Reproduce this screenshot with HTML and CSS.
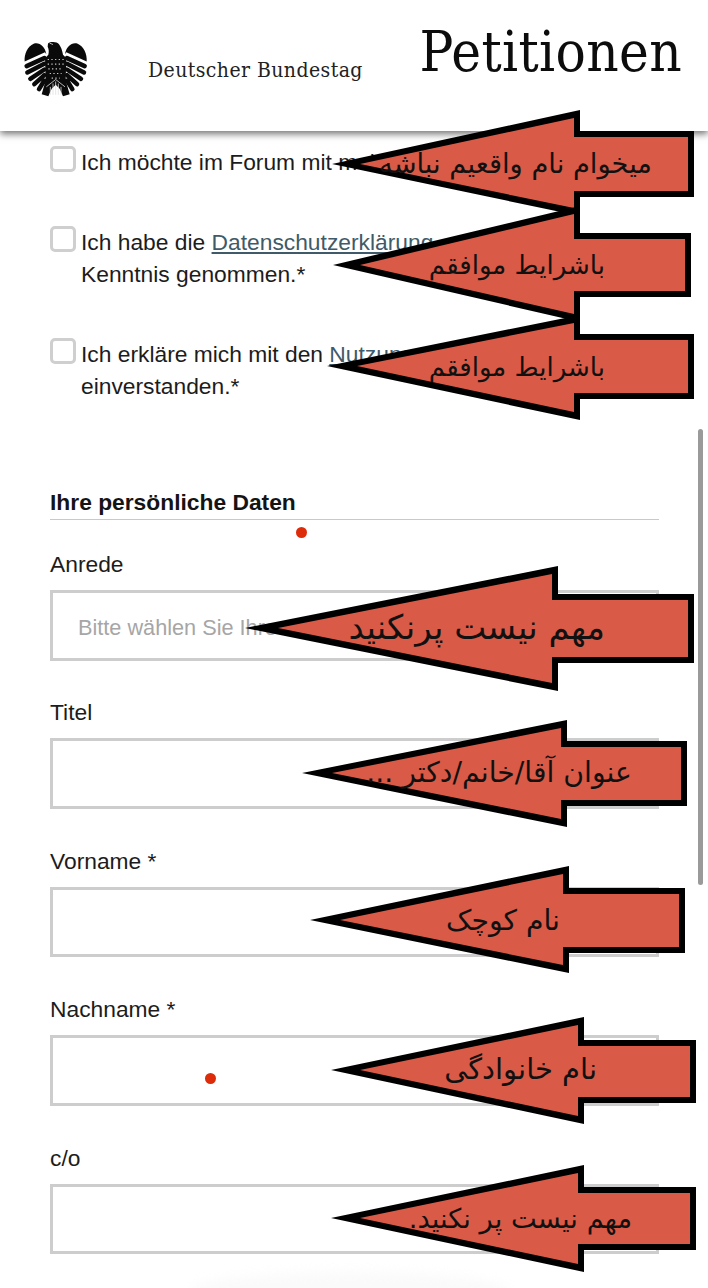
FILE: index.html
```html
<!DOCTYPE html>
<html lang="de">
<head>
<meta charset="utf-8">
<title>Petitionen</title>
<link rel="stylesheet" href="styles.css">
</head>
<body>
<div class="page">
  <header class="site-header">
    <svg class="eagle" viewBox="40 30 195 170" aria-hidden="true">
      <defs>
        <g id="wing">
          <path class="ink" d="M110 72C106 48 88 35 72 41C54 49 43 72 45 94L106 66Z"/>
          <path class="plume" d="M104 84L51 108M104 101L53 127M104 118L62 146M104 135L74 162M104 151L88 177"/>
        </g>
      </defs>
      <use href="#wing"/>
      <use href="#wing" transform="matrix(-1 0 0 1 276 0)"/>
      <path class="ink" d="M115 40C122 34 142 34 148 42C154 50 158 60 160 74L170 84L168 150L180 192L160 198L150 176L138 164L126 176L116 198L96 192L108 150L106 84L116 74C118 66 118 58 114 50Z"/>
      <path class="feather" d="M120 39L130 43"/>
      <path class="dots" d="M114 88H162M114 102H162M116 116H160M120 130H156M126 144H150"/>
      <path class="feather" d="M110 170L138 148L166 170M122 194V170M130 194V160M138 194V154M146 194V160M154 194V170"/>
    </svg>
    <span class="org">Deutscher Bundestag</span>
    <span class="site-title">Petitionen</span>
  </header>

  <main class="content">
    <div class="checks">
      <label class="check"><span class="box"></span><span class="check-text">Ich möchte im Forum mit meinem Namen</span></label>
      <label class="check"><span class="box"></span><span class="check-text">Ich habe die <a href="#">Datenschutzerklärung</a><br>Kenntnis genommen.*</span></label>
      <label class="check"><span class="box"></span><span class="check-text">Ich erkläre mich mit den <a href="#">Nutzungsbedingungen</a><br>einverstanden.*</span></label>
    </div>

    <h2 class="section-title">Ihre persönliche Daten</h2>

    <div class="field"><span class="label">Anrede</span><div class="input placeholder">Bitte wählen Sie Ihre Anrede</div></div>
    <div class="field"><span class="label">Titel</span><div class="input"></div></div>
    <div class="field"><span class="label">Vorname *</span><div class="input"></div></div>
    <div class="field"><span class="label">Nachname *</span><div class="input"></div></div>
    <div class="field"><span class="label">c/o</span><div class="input"></div></div>
  </main>

  <div class="scrollbar"></div>
  <div class="dot dot-a"></div>
  <div class="dot dot-b"></div>
  <div class="glow"></div>

  <svg class="arrows" viewBox="0 0 708 1288">
    <g class="arrow">
      <polygon class="out" points="332,164 580,110 580,131 694,131 694,197 580,197 580,216"/>
      <polygon class="in" points="360,164 574,118 574,137 688,137 688,191 574,191 574,208"/>
      <text class="s27" x="652" y="173">میخوام نام واقعیم نباشه</text>
    </g>
    <g class="arrow">
      <polygon class="out" points="333,265 580,206 580,233 691,233 691,297 580,297 580,322"/>
      <polygon class="in" points="360,265 574,214 574,239 685,239 685,291 574,291 574,314"/>
      <text x="605" y="274">باشرایط موافقم</text>
    </g>
    <g class="arrow">
      <polygon class="out" points="327,366 580,315 580,334 694,334 694,399 580,399 580,420"/>
      <polygon class="in" points="357,366 574,323 574,340 688,340 688,393 574,393 574,412"/>
      <text x="605" y="376">باشرایط موافقم</text>
    </g>
    <g class="arrow">
      <polygon class="out" points="245,628 558,566 558,594 694,594 694,663 558,663 558,691"/>
      <polygon class="in" points="278,628 552,574 552,600 688,600 688,657 552,657 552,683"/>
      <text class="s34" x="605" y="639">مهم نیست پرنکنید</text>
    </g>
    <g class="arrow">
      <polygon class="out" points="302,773 567,720 567,741 687,741 687,806 567,806 567,827"/>
      <polygon class="in" points="332,773 561,728 561,747 681,747 681,800 561,800 561,819"/>
      <text class="s28" x="632" y="782">عنوان آقا/خانم/دکتر ...</text>
    </g>
    <g class="arrow">
      <polygon class="out" points="310,920 569,866 569,888 685,888 685,953 569,953 569,973"/>
      <polygon class="in" points="340,920 563,874 563,894 679,894 679,947 563,947 563,965"/>
      <text class="s28" x="560" y="930">نام کوچک</text>
    </g>
    <g class="arrow">
      <polygon class="out" points="331,1070 584,1017 584,1040 696,1040 696,1103 584,1103 584,1124"/>
      <polygon class="in" points="360,1070 578,1025 578,1046 690,1046 690,1097 578,1097 578,1116"/>
      <text class="s29" x="597" y="1079">نام خانوادگی</text>
    </g>
    <g class="arrow">
      <polygon class="out" points="331,1218 584,1165 584,1187 696,1187 696,1250 584,1250 584,1272"/>
      <polygon class="in" points="360,1218 578,1173 578,1193 690,1193 690,1244 578,1244 578,1264"/>
      <text class="s27" x="632" y="1228">مهم نیست پر نکنید.</text>
    </g>
  </svg>
</div>
</body>
</html>
```

FILE: styles.css
```css
* { box-sizing: border-box; }
html, body { margin: 0; padding: 0; background: #fff; }
body { font-family: "Liberation Sans", Arial, sans-serif; color: #1c1c1c; }

.page {
  position: relative;
  width: 708px;
  height: 1288px;
  overflow: hidden;
  background: #fff;
}

.site-header {
  position: relative;
  z-index: 2;
  height: 131px;
  display: flex;
  align-items: flex-start;
  padding-right: 26px;
  background: #fff;
  box-shadow: 0 3px 7px rgba(0, 0, 0, 0.55);
}

.eagle {
  width: 65px;
  height: 57px;
  margin: 40px 0 0 23px;
  flex: none;
}
.ink { fill: #0a0a0a; }
.plume { fill: none; stroke: #0a0a0a; stroke-width: 13.5; stroke-linecap: round; }
.feather { fill: none; stroke: #e0e0e0; stroke-width: 2.4; }
.dots { fill: none; stroke: #c4c4c4; stroke-width: 3.6; stroke-dasharray: 4 7; }

.org {
  margin: 57px 0 0 60px;
  font-family: "DejaVu Serif", "Liberation Serif", serif;
  font-stretch: condensed;
  font-size: 21px;
  letter-spacing: 0.42px;
  line-height: 26px;
  color: #222;
  white-space: nowrap;
}
.site-title {
  margin: 18px 0 0 auto;
  font-family: "DejaVu Serif", "Liberation Serif", serif;
  font-stretch: condensed;
  font-size: 56px;
  letter-spacing: 0.35px;
  line-height: 68px;
  color: #0c0c0c;
  white-space: nowrap;
}

.content { padding: 15px 49px 0 50px; }

.checks { display: flex; flex-direction: column; gap: 48px; }
.check {
  display: flex;
  align-items: flex-start;
  gap: 5px;
  font-size: 22.8px;
  line-height: 32px;
  white-space: nowrap;
}
.box {
  flex: none;
  width: 26px;
  height: 26px;
  border: 3px solid #cfcfcf;
  border-radius: 5px;
  background: #fff;
}
.check a { color: #3f5a68; text-decoration: underline; }

.section-title {
  margin: 86px 0 0;
  padding-bottom: 3px;
  font-size: 22.8px;
  line-height: 28px;
  font-weight: 700;
  color: #141414;
  border-bottom: 1.5px solid #c9c9c9;
}

.field { margin-top: 30px; }
.field + .field { margin-top: 37.9px; }
.label { display: block; font-size: 22.8px; line-height: 28px; height: 40px; }
.input {
  height: 70.5px;
  border: 3px solid #cdcdcd;
  background: #fff;
  padding: 0 25px;
  white-space: nowrap;
  overflow: hidden;
}
.input.placeholder { color: #a6a6a6; font-size: 21.7px; line-height: 69px; }

.scrollbar {
  position: absolute;
  left: 698px;
  top: 429px;
  width: 5px;
  height: 456px;
  border-radius: 3px;
  background: #9a9a9a;
}
.dot {
  position: absolute;
  width: 11px;
  height: 11px;
  border-radius: 50%;
  background: #dd2c0a;
}
.dot-a { left: 296px; top: 527px; }
.dot-b { left: 205px; top: 1073px; }
.glow {
  position: absolute;
  left: 190px;
  top: 1272px;
  width: 320px;
  height: 40px;
  border-radius: 50%;
  background: #fafafa;
  filter: blur(6px);
}

.arrows {
  position: absolute;
  left: 0;
  top: 0;
  width: 708px;
  height: 1288px;
  z-index: 3;
}
.out { fill: #000; }
.in { fill: #d95a47; }
.arrow text {
  font-family: "DejaVu Sans", "Liberation Sans", sans-serif;
  font-size: 26px;
  fill: #111;
  direction: rtl;
  text-anchor: start;
}
.arrow text.s27 { font-size: 27.3px; }
.arrow text.s28 { font-size: 28.3px; }
.arrow text.s29 { font-size: 29px; }
.arrow text.s34 { font-size: 34px; }
```
